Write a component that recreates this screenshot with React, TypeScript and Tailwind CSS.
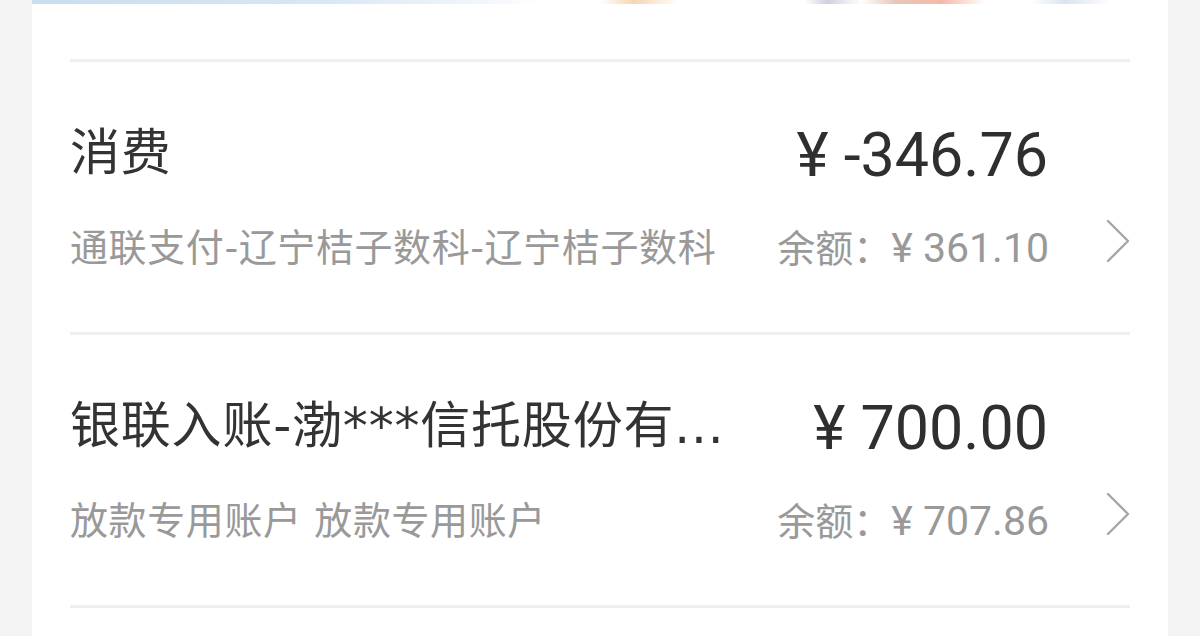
import React from "react";

function Chevron() {
  return (
    <svg width="24" height="44" viewBox="0 0 24 44" fill="none" className="shrink-0">
      <path d="M2 2 L22 22 L2 42" stroke="#a6a6a6" strokeWidth="2.4" strokeLinecap="round" strokeLinejoin="round" />
    </svg>
  );
}

type Item = { title: string; amount: string; sub: string; balance: string };

const items: Item[] = [
  { title: "消费", amount: "¥ -346.76", sub: "通联支付-辽宁桔子数科-辽宁桔子数科", balance: "¥ 361.10" },
  { title: "银联入账-渤***信托股份有...", amount: "¥ 700.00", sub: "放款专用账户 放款专用账户", balance: "¥ 707.86" },
];

function Row({ item }: { item: Item }) {
  return (
    <div className="pt-[61px] pb-[60px] border-b-[3px] border-[#efefef]">
      <div className="flex h-[64px] items-center">
        <div className="flex-1 min-w-0 pb-[5px] whitespace-nowrap tracking-[0.8px] text-[50px] leading-none text-[#333333] font-['DejaVu_Sans','Noto_Sans_CJK_SC',sans-serif]">
          {item.title}
        </div>
        <div className="mr-[82px] whitespace-nowrap text-[61px] leading-none font-normal text-[#2f2f2f] font-['Roboto','Noto_Sans_CJK_SC',sans-serif]">
          {item.amount}
        </div>
      </div>
      <div className="mt-[37px] flex h-[48px] items-center">
        <div className="flex-1 min-w-0 whitespace-nowrap tracking-[0.6px] text-[38px] leading-none text-[#999999] font-['DejaVu_Sans','Noto_Sans_CJK_SC',sans-serif]">
          {item.sub}
        </div>
        <div className="flex items-baseline whitespace-nowrap leading-none text-[#999999]">
          <span className="text-[38px] font-['Noto_Sans_CJK_SC',sans-serif]">余额：</span>
          <span className="text-[41px] font-['Roboto',sans-serif]">{item.balance}</span>
        </div>
        <div className="ml-[57px] -mt-[14px] flex items-center">
          <Chevron />
        </div>
      </div>
    </div>
  );
}

export default function App() {
  return (
    <div className="w-[1200px] h-[636px] overflow-hidden bg-[#f4f4f4] flex justify-center">
      <div className="w-[1136px] h-full bg-white flex flex-col">
        <div className="h-[4px] w-full bg-[linear-gradient(90deg,#c9deef_0%,#d7e7f4_25%,#eef4fa_38%,#ffffff_45%,#ffffff_50%,#f6d6b0_53%,#ffffff_57%,#ffffff_68%,#cfd0e2_70%,#ffffff_73%,#e6c8b8_76%,#f4b9a8_80%,#ffffff_84%,#ffffff_88%,#d9e3ef_91%,#ffffff_95%,#ffffff_100%)]" />
        <div className="px-[38px] mt-[55px]">
          <div className="border-t-[3px] border-[#efefef]" />
          {items.map((it, i) => (
            <Row key={i} item={it} />
          ))}
        </div>
      </div>
    </div>
  );
}
